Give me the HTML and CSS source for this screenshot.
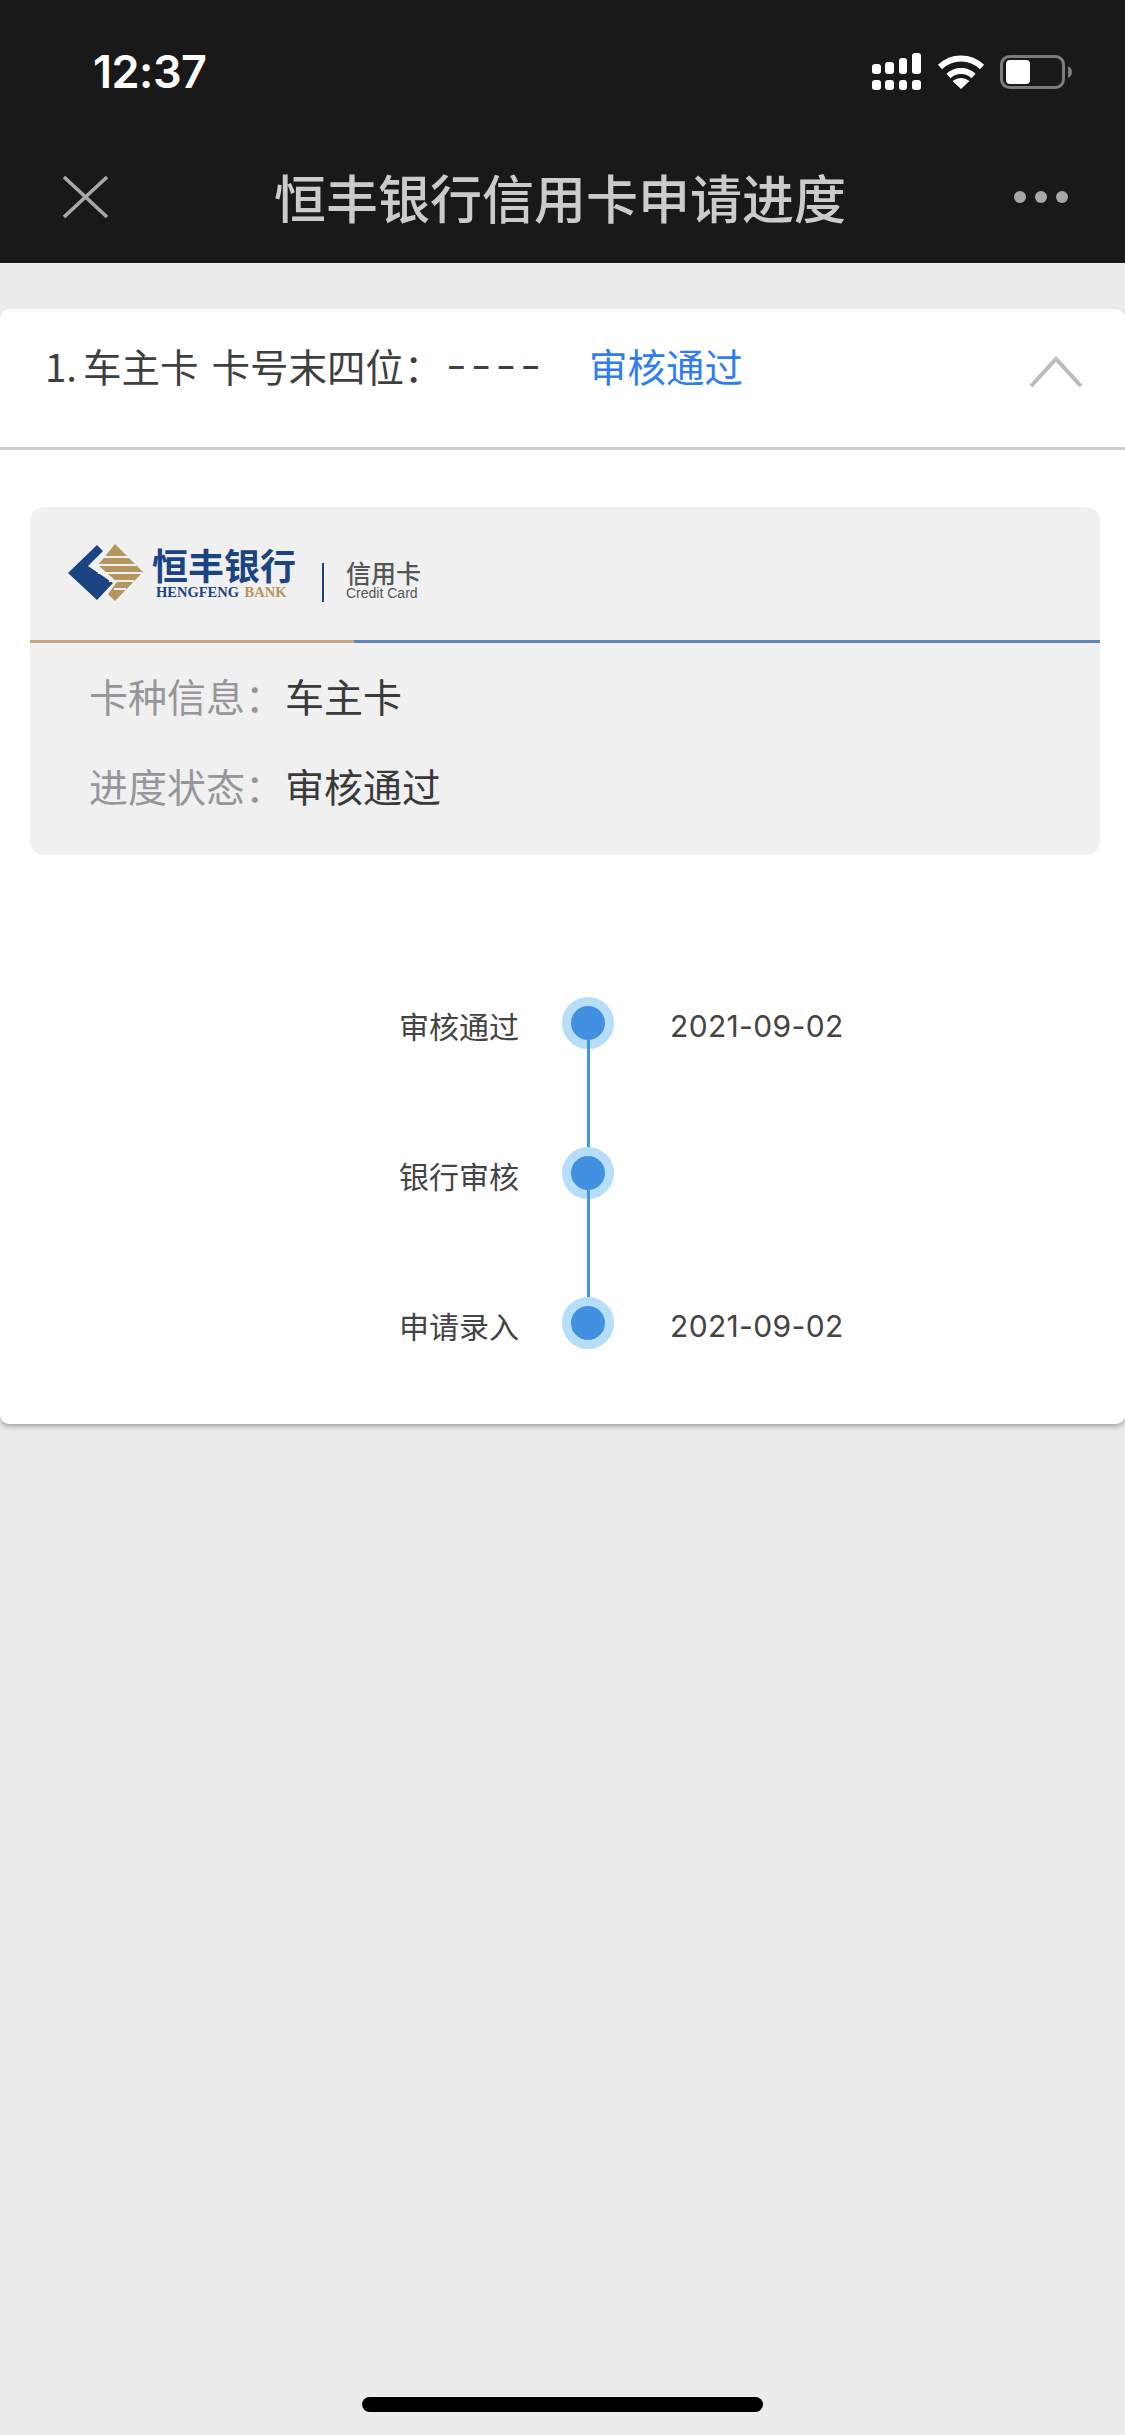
FILE: index.html
```html
<!DOCTYPE html>
<html lang="zh-CN">
<head>
<meta charset="utf-8">
<title>恒丰银行信用卡申请进度</title>
<link rel="stylesheet" href="styles.css">
</head>
<body>
<div class="page">
  <header class="topbar">
    <div class="status">
      <span class="time">12:37</span>
      <div class="status-icons">
        <svg class="signal" width="50" height="37" viewBox="0 0 50 37" fill="#fff">
          <rect x="0" y="11" width="9" height="10" rx="3"/><rect x="13" y="9" width="9" height="12" rx="3"/><rect x="27" y="5" width="8" height="16" rx="3"/><rect x="40" y="0" width="9" height="21" rx="3"/>
          <rect x="0" y="27" width="9" height="10" rx="3"/><rect x="13" y="27" width="9" height="10" rx="3"/><rect x="27" y="27" width="8" height="10" rx="3"/><rect x="40" y="27" width="9" height="10" rx="3"/>
        </svg>
        <svg class="wifi" width="48" height="34" viewBox="0 0 48 34">
          <path d="M3 12A30 30 0 0 1 45 12" fill="none" stroke="#fff" stroke-width="6"/>
          <path d="M11.500 21A18 18 0 0 1 36.500 21" fill="none" stroke="#fff" stroke-width="6"/>
          <path d="M24 34L15.500 26Q24 20 32.500 26Z" fill="#fff"/>
        </svg>
        <svg class="battery" width="72" height="34" viewBox="0 0 72 34">
          <rect x="1.500" y="1.500" width="62" height="31" rx="8" fill="none" stroke="#7b7b7b" stroke-width="3"/>
          <rect x="6" y="5" width="24" height="24" rx="4" fill="#fff"/>
          <path d="M68 11Q72 13 72 17Q72 21 68 23Z" fill="#7b7b7b"/>
        </svg>
      </div>
    </div>
    <nav class="nav">
      <div class="nav-left">
        <svg width="45" height="42" viewBox="0 0 45 42"><path d="M1 1L44 41M44 1L1 41" fill="none" stroke="#a8a8a8" stroke-width="3.500"/></svg>
      </div>
      <h1 class="title">恒丰银行信用卡申请进度</h1>
      <div class="nav-right"><i class="dot"></i><i class="dot"></i><i class="dot"></i></div>
    </nav>
  </header>

  <main class="main">
    <section class="card">
      <div class="card-head">
        <div class="head-text">
          <div class="head-info">
            <span class="head-index">1.</span>
            <span class="head-type">车主卡</span>
            <span>卡号末四位：</span><span class="dashes">----</span>
          </div>
          <span class="head-status">审核通过</span>
        </div>
        <svg class="chevron" width="54" height="31" viewBox="0 0 54 31"><path d="M2 30L27 3L52 30" fill="none" stroke="#bcbcbc" stroke-width="4"/></svg>
      </div>
      <div class="card-body">
        <div class="info">
          <div class="brand">
            <svg class="mark" width="76" height="58" viewBox="0 0 76 58">
              <path d="M0 29L29 1L35 7L20 22L45 39L29 56Z" fill="#1c4483"/>
              <path d="M47 0L75 28L47 57L40 50L49 38L30 21Z" fill="#b6965f"/>
              <path d="M34 13H61M28 21H68M30 29H74M41 37H66M46 45H58" stroke="#f0f0f0" stroke-width="2" fill="none"/>
            </svg>
            <div class="brand-name">
              <span class="brand-cn">恒丰银行</span>
              <span class="brand-en">HENGFENG <b>BANK</b></span>
            </div>
            <i class="brand-sep"></i>
            <div class="brand-sub">
              <span class="sub-cn">信用卡</span>
              <span class="sub-en">Credit Card</span>
            </div>
          </div>
          <div class="rule"></div>
          <div class="rows">
            <div class="row"><span class="key">卡种信息：</span><span class="val">车主卡</span></div>
            <div class="row"><span class="key">进度状态：</span><span class="val">审核通过</span></div>
          </div>
        </div>
        <ol class="timeline">
          <li class="step"><span class="step-label">审核通过</span><span class="node"></span><span class="step-date">2021-09-02</span></li>
          <li class="step"><span class="step-label">银行审核</span><span class="node"></span><span class="step-date"></span></li>
          <li class="step step-last"><span class="step-label">申请录入</span><span class="node"></span><span class="step-date">2021-09-02</span></li>
        </ol>
      </div>
    </section>
  </main>
  <div class="home-bar"></div>
</div>
</body>
</html>
```
FILE: styles.css
```css
* { box-sizing: border-box; }
html, body { margin: 0; padding: 0; }
body {
  width: 1125px;
  height: 2435px;
  overflow: hidden;
  background: #ececec;
  font-family: "Inter", "Noto Sans CJK SC", sans-serif;
  color: #3a3a3a;
}
.page { height: 2435px; display: flex; flex-direction: column; }

.topbar { background: #191919; height: 263px; flex: none; }
.status {
  height: 93px;
  padding: 50px 53px 0 93px;
  display: flex;
  justify-content: space-between;
  align-items: center;
}
.time { color: #fff; font-size: 45px; font-weight: 600; line-height: 43px; letter-spacing: -0.5px; }
.status-icons { display: flex; align-items: center; }
.signal { margin-right: 15px; }
.wifi { margin-right: 15px; }

.nav {
  height: 170px;
  padding: 38px 68px 0 63px;
  display: grid;
  grid-template-columns: 1fr auto 1fr;
  align-items: center;
}
.nav-left { display: flex; align-items: center; }
.nav-left svg { display: block; }
.title {
  margin: 0;
  color: #cbcbcb;
  font-family: "Noto Sans CJK SC", sans-serif;
  font-size: 52px;
  font-weight: 500;
  line-height: 132px;
}
.nav-right { display: flex; justify-content: flex-end; gap: 9px; margin-right: -11px; }
.dot { width: 12px; height: 12px; border-radius: 50%; background: #a8a8a8; display: block; }

.main { padding-top: 46px; flex: none; }
.card {
  background: #fff;
  border-radius: 9px;
  box-shadow: 0 3px 5px rgba(0, 0, 0, .28);
  height: 1115px;
}
.card-head {
  height: 141px;
  border-bottom: 3px solid #cfcfd3;
  padding: 0 41px 0 45px;
  display: flex;
  justify-content: space-between;
  align-items: flex-start;
}
.head-text {
  margin-top: 24px;
  font-family: "Noto Sans CJK SC", sans-serif;
  font-size: 38.500px;
  line-height: 64px;
  display: flex;
  white-space: nowrap;
}
.head-info { color: #3f3f3f; width: 544px; display: flex; }
.head-index { width: 38px; }
.head-type { margin-right: 13px; }
.dashes { margin-left: 3px; font-family: "Inter", sans-serif; font-size: 48px; font-weight: 300; letter-spacing: 3px; }
.head-status { color: #2f7cf6; }
.chevron { margin-top: 47px; display: block; margin-right: 1px; }

.card-body { padding: 57px 25px 0 30px; }
.info { background: #f0f0f0; border-radius: 14px; height: 348px; overflow: hidden; }
.brand { height: 133px; padding: 37px 0 0 38px; display: flex; align-items: flex-start; }
.mark { display: block; flex: none; }
.brand-name { margin-left: 8px; width: 150px; display: flex; flex-direction: column; }
.brand-cn {
  font-family: "Noto Sans CJK SC", sans-serif;
  font-weight: 700;
  font-size: 36px;
  line-height: 40px;
  color: #1c4483;
  white-space: nowrap;
}
.brand-en {
  font-family: "Liberation Serif", serif;
  font-weight: 700;
  font-size: 14.500px;
  line-height: 17px;
  color: #1c4483;
  padding-left: 4px;
  white-space: nowrap;
}
.brand-en b { color: #b6965f; margin-left: 2px; }
.brand-sep { display: block; width: 2px; height: 39px; margin: 19px 0 0 20px; background: #1c4483; }
.brand-sub { margin: 13px 0 0 22px; display: flex; flex-direction: column; }
.sub-cn {
  font-family: "Noto Sans CJK SC", sans-serif;
  font-size: 25px;
  font-weight: 500;
  line-height: 30px;
  color: #555;
  white-space: nowrap;
}
.sub-en { font-family: "Liberation Sans", sans-serif; font-size: 14px; line-height: 12px; color: #555; white-space: nowrap; }
.rule { height: 3px; background: linear-gradient(to right, #c2a87f 0 324px, #5f86ba 324px); }
.rows { padding: 20px 0 0 59px; }
.row {
  height: 90px;
  line-height: 64px;
  display: flex;
  font-family: "Noto Sans CJK SC", sans-serif;
  font-size: 39px;
  white-space: pre;
}
.key { width: 196px; color: #97979b; }
.val { color: #3a3a3a; }

.timeline { list-style: none; margin: 142px 0 0; padding: 0; }
.step {
  height: 150px;
  margin-left: -30px;
  display: grid;
  grid-template-columns: 519px 52px auto;
  column-gap: 43px;
  color: #444;
}
.step-last { height: 52px; }
.step-label { font-family: "Noto Sans CJK SC", sans-serif; font-size: 30px; line-height: 56px; text-align: right; white-space: nowrap; }
.step-date { margin-left: 13px; font-family: "Inter", sans-serif; font-size: 30px; line-height: 58px; letter-spacing: 0.35px; white-space: nowrap; }
.node {
  position: relative;
  width: 52px;
  height: 52px;
  border-radius: 50%;
  background: #4291e0;
  border: 9px solid #b6def9;
}
.node::after {
  content: "";
  position: absolute;
  left: 16px;
  top: 34px;
  width: 3px;
  height: 116px;
  background: #4396e2;
}
.step-last .node::after { display: none; }

.home-bar {
  position: absolute;
  left: 362px;
  top: 2397px;
  width: 401px;
  height: 15px;
  border-radius: 8px;
  background: #000;
}
```
